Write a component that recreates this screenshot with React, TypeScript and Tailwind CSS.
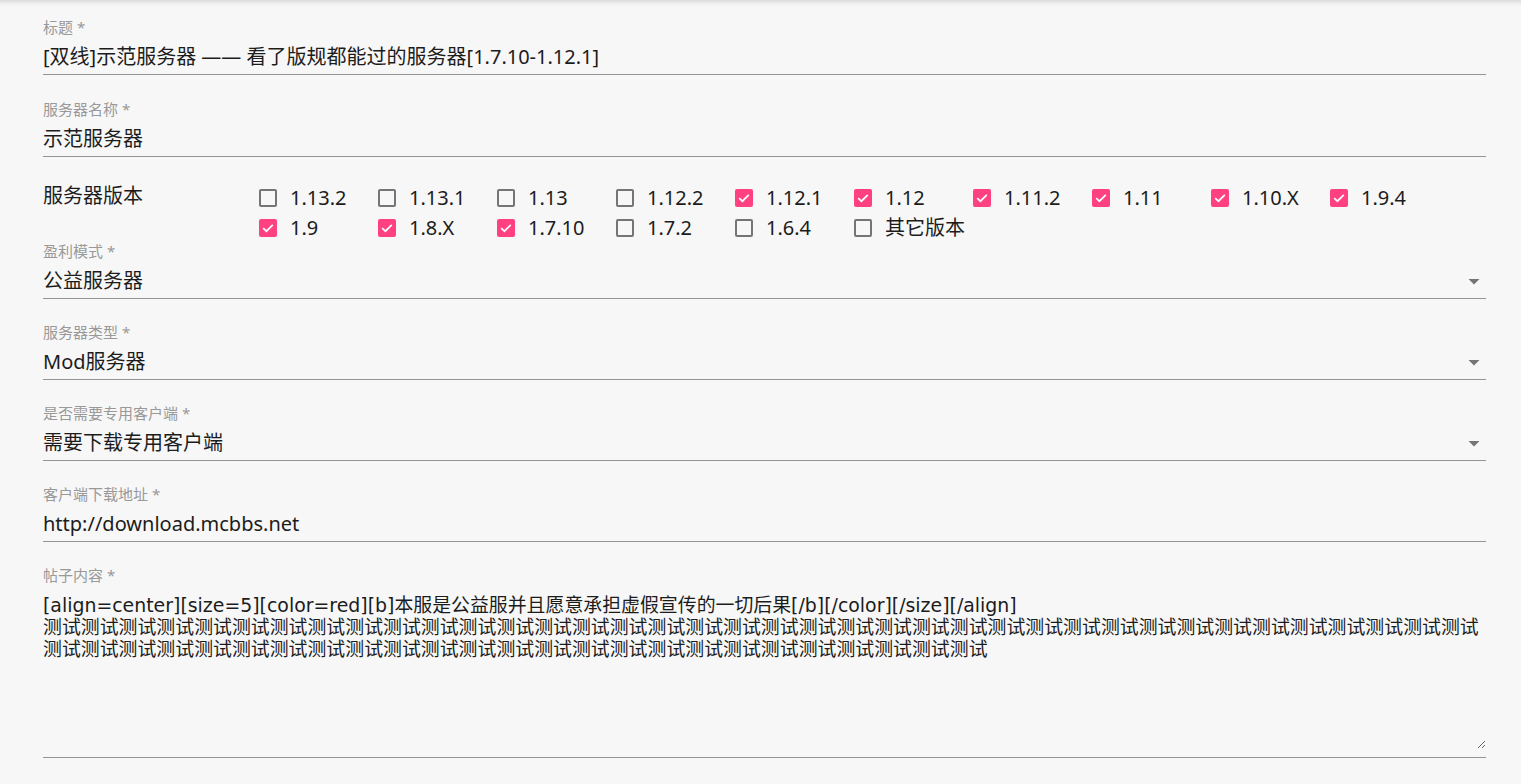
import React from "react";

const FONT = '"Noto Sans", "Noto Sans CJK SC", sans-serif';
const AREA_FONT = '"DejaVu Sans", "Noto Sans CJK SC", sans-serif';

const versions: [string, boolean][] = [
  ["1.13.2", false],
  ["1.13.1", false],
  ["1.13", false],
  ["1.12.2", false],
  ["1.12.1", true],
  ["1.12", true],
  ["1.11.2", true],
  ["1.11", true],
  ["1.10.X", true],
  ["1.9.4", true],
  ["1.9", true],
  ["1.8.X", true],
  ["1.7.10", true],
  ["1.7.2", false],
  ["1.6.4", false],
  ["其它版本", false],
];

function Box({ checked }: { checked: boolean }) {
  if (checked) {
    return (
      <span className="w-[18px] h-[18px] rounded-[2px] bg-[#ff4081] flex items-center justify-center shrink-0">
        <svg width="18" height="18" viewBox="0 0 18 18">
          <path d="M4.2 9.2 L7.4 12.2 L13.8 5.8" fill="none" stroke="#ffffff" strokeWidth="1.7" />
        </svg>
      </span>
    );
  }
  return <span className="w-[18px] h-[18px] rounded-[2px] border-[2.5px] border-[#757575] shrink-0 box-border" />;
}

function Arrow() {
  return (
    <svg width="24" height="24" viewBox="0 0 24 24" className="shrink-0">
      <path d="M6.5 10l5.5 5.5 5.5-5.5z" fill="#757575" />
    </svg>
  );
}

function Field({
  label,
  value,
  select,
  mt,
}: {
  label: string;
  value: string;
  select?: boolean;
  mt: string;
}) {
  return (
    <div className={mt}>
      <div className="text-[15px] leading-[18px] text-[#999999]">{label} *</div>
      <div className="mt-[7px] h-[32px] border-b border-[#949494] flex justify-between box-border">
        <div className="text-[20px] leading-[28px] text-[#1c1c1c]">{value}</div>
        {select && (
          <div className="h-[28px] flex items-center">
            <Arrow />
          </div>
        )}
      </div>
    </div>
  );
}

export default function App() {
  const test = "测试".repeat(63);
  const content =
    "[align=center][size=5][color=red][b]本服是公益服并且愿意承担虚假宣传的一切后果[/b][/color][/size][/align]\n" +
    test;
  return (
    <div
      className="min-h-screen bg-[#f7f7f7] shadow-[inset_0_7px_7px_-7px_rgba(0,0,0,0.22)]"
      style={{ fontFamily: FONT }}
    >
      <div className="pl-[43px] pr-[35px] pt-[18px] pb-[20px]">
        <Field mt="" label="标题" value="[双线]示范服务器 —— 看了版规都能过的服务器[1.7.10-1.12.1]" />
        <Field mt="mt-[25px]" label="服务器名称" value="示范服务器" />

        <div className="mt-[26px] flex">
          <div className="w-[216px] shrink-0 text-[20px] leading-[26px] text-[#1c1c1c]">服务器版本</div>
          <div className="grid grid-cols-[repeat(10,119px)]">
            {versions.map(([v, c]) => (
              <div key={v} className="h-[30px] flex items-center">
                <Box checked={c} />
                <span className="ml-[13px] text-[20px] leading-[28px] text-[#1c1c1c]">{v}</span>
              </div>
            ))}
          </div>
        </div>

        <Field mt="-mt-[1px]" label="盈利模式" value="公益服务器" select />
        <Field mt="mt-[24px]" label="服务器类型" value="Mod服务器" select />
        <Field mt="mt-[24px]" label="是否需要专用客户端" value="需要下载专用客户端" select />
        <Field mt="mt-[24px]" label="客户端下载地址" value="http://download.mcbbs.net" />

        <div className="mt-[24px]">
          <div className="text-[15px] leading-[18px] text-[#999999]">帖子内容 *</div>
          <div className="mt-[10px] pb-[8px] border-b border-[#949494] flex">
            <textarea
              readOnly
              value={content}
              className="w-full h-[155px] bg-transparent outline-none resize-y text-[18.9px] leading-[22px] text-[#1c1c1c] p-0 m-0 block"
              style={{ fontFamily: AREA_FONT }}
            />
          </div>
        </div>
      </div>
    </div>
  );
}
